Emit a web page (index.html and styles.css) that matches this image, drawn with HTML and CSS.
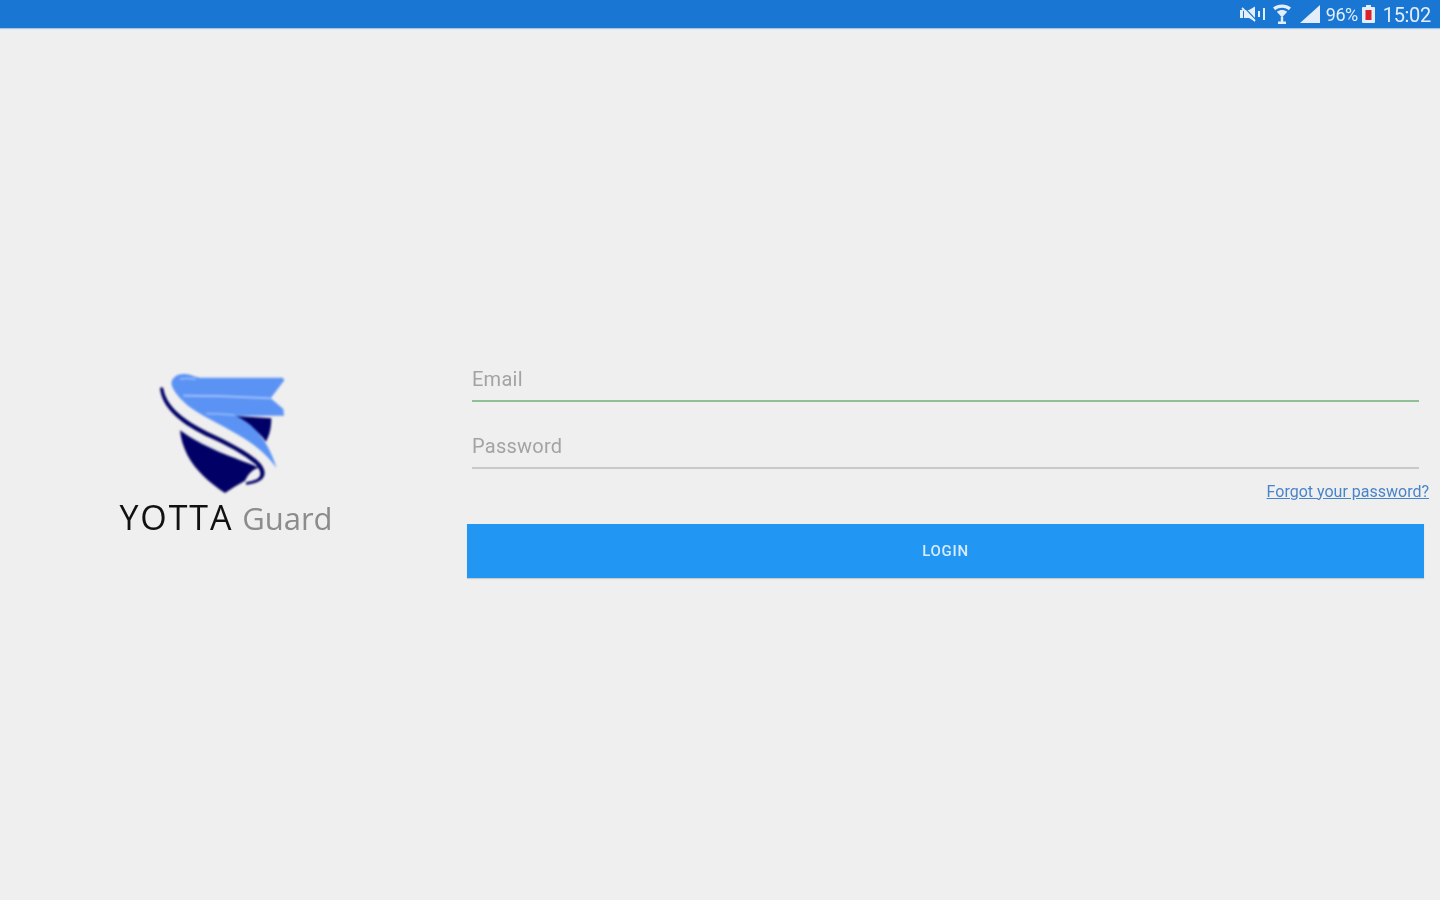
FILE: index.html
```html
<!DOCTYPE html>
<html lang="en">
<head>
<meta charset="utf-8">
<title>YOTTA Guard</title>
<link rel="stylesheet" href="styles.css">
</head>
<body>
<header class="status-bar">
  <svg class="icon icon-mute" viewBox="0 0 26 16" aria-hidden="true">
    <path d="M0 4h3v8H0z M4 4h5l6-3.500v15L9 12H4z" fill="#e4eefa"/>
    <path d="M3 0l13 14" stroke="#1976d2" stroke-width="1.200"/>
    <path d="M2 2l13 13" stroke="#e4eefa" stroke-width="1.800"/>
    <path d="M18 5v6h2V5z M23 2v12h2V2z" fill="#e4eefa"/>
  </svg>
  <svg class="icon icon-wifi" viewBox="0 0 18 20" aria-hidden="true">
    <path d="M0 3.500C5 -.5 13 -.5 18 3.500l-2.200 2.700C11 3 7 3 2.200 6.200z" fill="#e4eefa"/>
    <path d="M3.800 7.800c3.500-2.500 6.900-2.500 10.400 0L9 13.500z" fill="#e4eefa"/>
    <path d="M7.800 13h2.400v5H7.800z M5 17.500h8V20H5z" fill="#e4eefa"/>
  </svg>
  <svg class="icon icon-signal" viewBox="0 0 20 18" aria-hidden="true">
    <path d="M0 18L20 0v18z" fill="#e4eefa"/>
  </svg>
  <span class="status-text">96%</span>
  <svg class="icon icon-battery" viewBox="0 0 13 18" aria-hidden="true">
    <path d="M4 0h5v2h3a1 1 0 0 1 1 1v14a1 1 0 0 1-1 1H1a1 1 0 0 1-1-1V3a1 1 0 0 1 1-1h3z" fill="#e4eefa"/>
    <rect x="3.500" y="5" width="6" height="10" fill="#d8232a"/>
  </svg>
  <span class="status-time">15:02</span>
</header>

<main class="screen">
  <section class="brand">
    <svg class="logo" viewBox="0 0 690 390" role="img" aria-label="YOTTA Guard shield">
      <path fill="#000066" d="M365 152L484 160C484 190 478 212 468 230C445 198 410 175 365 152z"/>
      <path fill="#000066" d="M210 196C250 225 300 250 345 268C385 284 425 298 446 308C430 312 415 325 405 347C385 358 362 372 345 384C300 355 255 315 232 270C220 245 212 222 210 196z"/>
      <path fill="#000066" d="M150 70C152 66 158 66 160 70C168 118 210 160 292 200C352 228 412 258 444 288C468 310 470 334 452 346C440 354 425 358 408 359L408 352C422 350 436 346 444 340C456 330 452 316 436 298C406 270 350 240 286 212C205 172 155 125 150 70z"/>
      <path fill="none" stroke="#e4e7ee" stroke-width="5" stroke-linecap="round" d="M232 208C265 228 300 244 335 255"/>
      <path fill="#5b93f5" d="M184 55C186 34 208 24 232 28C245 30 255 37 270 38L518 38L523 46L482 100L520 132L522 152L376 152C430 175 474 225 499 308C472 272 445 247 405 222C350 187 290 162 240 127C215 107 188 80 184 55z"/>
      <path fill="none" stroke="#a8c6fa" stroke-width="5" stroke-linecap="round" d="M222 92C300 92 400 96 480 100"/>
      <path fill="none" stroke="#a8c6fa" stroke-width="4" stroke-linecap="round" d="M290 146C320 146 345 148 372 150"/>
      <path fill="none" stroke="#a9c7fa" stroke-width="4" stroke-linecap="round" d="M212 42C225 38 240 40 255 42"/>
    </svg>
    <div class="wordmark"><span class="word-dark">YOTTA</span> <span class="word-light">Guard</span></div>
  </section>

  <form class="login">
    <input class="field field-focus" type="text" placeholder="Email">
    <input class="field" type="password" placeholder="Password">
    <a class="forgot" href="#">Forgot your password?</a>
    <button class="submit" type="button"><span class="submit-label">LOGIN</span></button>
  </form>
</main>
</body>
</html>
```

FILE: styles.css
```css
* { box-sizing: border-box; }

html, body {
  margin: 0;
  height: 100%;
}

body {
  display: flex;
  flex-direction: column;
  background: #efefef;
  font-family: Roboto, "Liberation Sans", sans-serif;
  overflow: hidden;
}

.status-bar {
  flex: none;
  height: 28px;
  display: flex;
  align-items: center;
  justify-content: flex-end;
  padding-right: 9px;
  background: #1976d2;
  color: #e4eefa;
  box-shadow: 0 1px 1px rgba(25, 118, 210, 0.35);
}

.icon { display: block; flex: none; filter: blur(0.7px); }
.icon-mute { width: 26px; height: 16px; margin-right: 7px; }
.icon-wifi { width: 18px; height: 20px; margin-right: 9px; }
.icon-signal { width: 20px; height: 18px; margin-right: 6px; }
.icon-battery { width: 13px; height: 18px; margin: 0 8px 0 4px; }

.status-text { font-size: 18px; letter-spacing: -0.5px; filter: blur(0.7px); }
.status-time { font-size: 20px; letter-spacing: -0.3px; margin-top: 2px; filter: blur(0.7px); }

.screen {
  flex: 1;
  display: flex;
  align-items: center;
}

.brand {
  flex: none;
  width: 452px;
  display: flex;
  flex-direction: column;
  align-items: center;
  margin-top: -26px;
}

.logo {
  display: block;
  width: 230px;
  height: 130px;
  margin-right: 2px;
  filter: blur(0.8px);
}

.wordmark {
  margin-top: 2px;
  font-family: "Open Sans", sans-serif;
  font-size: 34px;
  line-height: 40px;
  white-space: nowrap;
  filter: blur(0.7px);
}

.word-dark { color: #111; letter-spacing: 1.9px; }
.word-light { color: #8c8c8c; font-size: 31px; }

.login {
  flex: none;
  width: 957px;
  margin: 4px 0 0 15px;
  padding-top: 1px;
  display: flex;
  flex-direction: column;
}

.field {
  display: block;
  width: auto;
  margin: 0 5px;
  height: 46px;
  padding: 3px 0 0;
  border: 0;
  border-bottom: 2px solid #c9c9c9;
  background: transparent;
  font: 20px Roboto, sans-serif;
  outline: none;
  filter: blur(0.6px);
}

.field::placeholder { color: #a3a3a3; opacity: 1; letter-spacing: 0.25px; }
.field + .field { margin-top: 21px; }
.field-focus { border-bottom-color: #8fbf94; }

.forgot {
  align-self: flex-end;
  margin: 13px -5px 0 0;
  font-size: 16px;
  line-height: 20px;
  color: #4a84c8;
  filter: blur(0.6px);
}

.submit {
  height: 54px;
  margin-top: 22px;
  padding: 0;
  border: 0;
  background: #2196f3;
  box-shadow: 0 1px 1px rgba(0, 0, 0, 0.15);
}

.submit-label {
  display: block;
  color: #d9ecfc;
  font: 500 15px Roboto, sans-serif;
  letter-spacing: 0.7px;
  filter: blur(0.6px);
}
```
